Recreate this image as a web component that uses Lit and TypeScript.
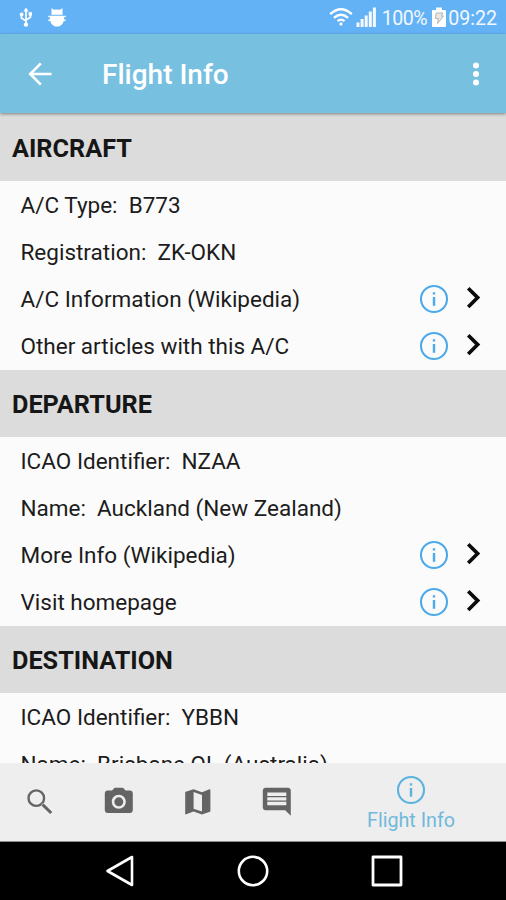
import { LitElement, html, css, svg, nothing } from "lit";
import { customElement } from "lit/decorators.js";

interface Row {
  label: string;
  value?: string;
  link?: boolean;
}
interface Section {
  title: string;
  rows: Row[];
}

const sections: Section[] = [
  {
    title: "AIRCRAFT",
    rows: [
      { label: "A/C Type:", value: "B773" },
      { label: "Registration:", value: "ZK-OKN" },
      { label: "A/C Information (Wikipedia)", link: true },
      { label: "Other articles with this A/C", link: true },
    ],
  },
  {
    title: "DEPARTURE",
    rows: [
      { label: "ICAO Identifier:", value: "NZAA" },
      { label: "Name:", value: "Auckland (New Zealand)" },
      { label: "More Info (Wikipedia)", link: true },
      { label: "Visit homepage", link: true },
    ],
  },
  {
    title: "DESTINATION",
    rows: [
      { label: "ICAO Identifier:", value: "YBBN" },
      { label: "Name:", value: "Brisbane QL (Australia)" },
    ],
  },
];

const infoIcon = html`<svg class="info" width="30" height="30" viewBox="0 0 30 30">
  <circle cx="15" cy="15" r="13" fill="none" stroke="currentColor" stroke-width="2.1" />
  <path d="M13.8 8.2h2.4v2.3h-2.4zM13.8 13.1h2.4v8.6h-2.4z" fill="currentColor" />
</svg>`;

const chevron = html`<svg class="chevron" width="16" height="24" viewBox="0 0 16 24">
  <path d="M2.2 2.2 11.7 11.6 2.2 21" fill="none" stroke="#0b0b0b" stroke-width="3.6" />
</svg>`;

const tabIcons = [
  "M9.5 3a6.400 6.400 0 1 0 0 12.800a6.400 6.400 0 1 0 0-12.800zm0 1.700a4.700 4.700 0 1 1 0 9.400a4.700 4.700 0 1 1 0-9.400zM12.900 14.400 14.400 12.900 20.900 19.300 19.400 20.800z",
  "M12 8.8a3.2 3.2 0 1 0 0 6.4a3.2 3.2 0 1 0 0-6.4zM9 2 7.17 4H4c-1.1 0-2 .9-2 2v12c0 1.1.9 2 2 2h16c1.1 0 2-.9 2-2V6c0-1.1-.9-2-2-2h-3.17L15 2H9zm3 15c-2.76 0-5-2.24-5-5s2.24-5 5-5 5 2.24 5 5-2.24 5-5 5z",
  "M20.5 3l-.16.03L15 5.1 9 3 3.36 4.9c-.21.07-.36.25-.36.48V20.5c0 .28.22.5.5.5l.16-.03L9 18.9l6 2.1 5.64-1.9c.21-.07.36-.25.36-.48V3.5c0-.28-.22-.5-.5-.5zM15 19l-6-2.11V5l6 2.11V19z",
  "M21.99 4c0-1.1-.89-2-1.99-2H4c-1.1 0-2 .9-2 2v12c0 1.1.9 2 2 2h14l4 4-.01-18zM18.800 14.500H5.200v-2.500h13.600zm0-3.400H5.200V8.800h13.600zm0-3.200H5.200V5.400h13.600z",
];

@customElement("app-root")
export class AppRoot extends LitElement {
  static styles = css`
    :host {
      display: flex;
      flex-direction: column;
      height: 900px;
      width: 506px;
      overflow: hidden;
      font-family: Roboto, "Liberation Sans", sans-serif;
      background: #fbfbfb;
      color: #1c1c1c;
    }
    svg {
      display: block;
      flex: none;
    }
    .status {
      flex: none;
      height: 34px;
      background: #64b2f6;
      color: #f2f8ff;
      display: flex;
      align-items: center;
      padding: 0 9px 0 18px;
      font-size: 19.6px;
      box-sizing: border-box;
    }
    .status span {
      line-height: 34px;
      padding-top: 3px;
    }
    .droid {
      margin-left: 13px;
    }
    .wifi {
      margin-left: auto;
    }
    .signal {
      margin: 0 5px 0 3px;
    }
    .percent {
      letter-spacing: -0.5px;
    }
    .battery {
      margin: 0 2px 0 5px;
    }
    .toolbar {
      flex: none;
      height: 79px;
      background: #78c0e0;
      color: #fff;
      display: flex;
      align-items: center;
      padding: 0 22px 0 28px;
      box-sizing: border-box;
      box-shadow: 0 1px 3px rgba(60, 50, 50, 0.55);
      z-index: 1;
    }
    .title {
      flex: 1;
      margin: 3px 0 0 50px;
      font-size: 28px;
      font-weight: 500;
      line-height: 36px;
    }
    .list {
      flex: 1;
      min-height: 0;
      overflow: hidden;
      padding-top: 1px;
      background: #dcdcdc;
    }
    .heading {
      height: 67.2px;
      line-height: 70px;
      padding-left: 12px;
      background: #dcdcdc;
      font-size: 25.25px;
      font-weight: 700;
      color: #161616;
    }
    .rows {
      background: #fbfbfb;
    }
    .row {
      height: 47.2px;
      display: flex;
      align-items: center;
      padding: 0 24.5px 0 20.5px;
      font-size: 22.5px;
    }
    .label {
      white-space: pre;
      padding-top: 0.3px;
    }
    .info {
      color: #4ca9ea;
      margin-left: auto;
    }
    .chevron {
      margin: -2px 0 0 17px;
    }
    .tabs {
      flex: none;
      height: 79px;
      box-sizing: border-box;
      background: #eeeeee;
      border-bottom: 1px solid #8e8e8e;
      display: grid;
      grid-template-columns: repeat(4, 79px) 1fr;
      align-items: center;
      justify-items: center;
      color: #646464;
    }
    .active {
      color: #70b9dc;
      font-size: 19.7px;
      line-height: 24px;
      display: flex;
      flex-direction: column;
      align-items: center;
      gap: 4px;
      padding-top: 4px;
    }
    .active .info {
      color: #5bb4dd;
      margin: 0;
    }
    .navbar {
      flex: none;
      height: 58px;
      background: #000;
      display: flex;
      align-items: center;
      justify-content: space-between;
      padding: 0 102px 0 104px;
    }
  `;

  render() {
    return html`
      <div class="status">
        <svg width="16" height="22" viewBox="0 0 16 22" fill="none" stroke="#fff" stroke-width="1.7">
          <path d="M8 4v14M3.4 9v3L8 15M12.4 8v3.2L8 14" />
          <path d="M8 1.500l2.6 4H5.400z" fill="#fff" stroke="none" />
          <circle cx="8" cy="18.600" r="2.200" fill="#fff" stroke="none" />
          <circle cx="3.600" cy="8.400" r="1.900" fill="#fff" stroke="none" />
          <path d="M10.600 6.200H14v3.400h-3.400z" fill="#fff" stroke="none" />
        </svg>
        <svg class="droid" width="20" height="22" viewBox="0 0 20 22" fill="#fff">
          <path d="M4.600 2 6.800 3.800Q10 3.200 13.200 3.800L15.400 2 15.600 8.800H4.400zM1.300 9.800H18.700V11.200H1.300zM3 9.800H17V14.500Q16 18.500 13 20Q10 21.200 7 20Q4 18.500 3 14.500zM1.300 13.600H18.700V15H1.300z" />
        </svg>
        <svg class="wifi" width="24" height="20" viewBox="0 0 24 20" fill="none" stroke="#fff" stroke-width="2.300">
          <path d="M1.200 7.200Q12-2.600 22.800 7.200M4.900 10.900Q12 4.600 19.100 10.900M8.500 14.200Q12 11.100 15.500 14.200" />
          <circle cx="12" cy="16.900" r="1.600" fill="#fff" stroke="none" />
        </svg>
        <svg class="signal" width="21" height="22" viewBox="0 0 21 22" fill="#f4faff">
          <path d="M.5 16.500h3v4.500h-3zM4.600 13h3v8h-3zM8.700 9.500h3V21h-3zM12.800 5.500h3V21h-3zM16.900 1.500h3V21h-3z" />
        </svg>
        <span class="percent">100%</span>
        <svg class="battery" width="14" height="22" viewBox="0 0 14 22">
          <path d="M4 1.500h6V4h3q1 0 1 1v15q0 1-1 1H1q-1 0-1-1V5q0-1 1-1h3z" fill="#fff" />
          <path d="M4.200 7h6.600L9.500 10h2L5.600 17.500 6.400 12.500H3.300z" fill="#e8e8e2" stroke="#b4b8b4" />
        </svg>
        <span>09:22</span>
      </div>
      <div class="toolbar">
        <svg width="24" height="24" viewBox="0 0 24 24" fill="none" stroke="#fff" stroke-width="2.600">
          <path d="M12.800 1.400 2.200 12l10.600 10.600M2.200 12H23.500" />
        </svg>
        <div class="title">Flight Info</div>
        <svg width="16" height="26" viewBox="0 0 16 26" fill="#fff">
          <circle cx="8" cy="4.500" r="3" /><circle cx="8" cy="13" r="3" /><circle cx="8" cy="21.500" r="3" />
        </svg>
      </div>
      <div class="list">
        ${sections.map(
          (s) => html`
            <div class="heading">${s.title}</div>
            <div class="rows">
              ${s.rows.map(
                (r) => html`<div class="row">
                  <span class="label">${r.value ? `${r.label}  ${r.value}` : r.label}</span>
                  ${r.link ? html`${infoIcon}${chevron}` : nothing}
                </div>`
              )}
            </div>
          `
        )}
      </div>
      <div class="tabs">
        ${tabIcons.map(
          (d) => html`<svg width="33.600" height="33.600" viewBox="0 0 24 24" fill="currentColor" fill-rule="evenodd">${svg`<path d=${d} />`}</svg>`
        )}
        <div class="active">${infoIcon}<span>Flight Info</span></div>
      </div>
      <div class="navbar">
        <svg width="32" height="34" viewBox="0 0 32 34" fill="none" stroke="#fff" stroke-width="2.600" stroke-linejoin="round">
          <path d="M3.500 17 28 3v28z" />
        </svg>
        <svg width="34" height="34" viewBox="0 0 34 34" fill="none" stroke="#fff" stroke-width="2.600">
          <circle cx="17" cy="17" r="14.200" />
        </svg>
        <svg width="34" height="34" viewBox="0 0 34 34" fill="none" stroke="#fff" stroke-width="2.800" stroke-linejoin="round">
          <path d="M3 3H31V31H3z" />
        </svg>
      </div>
    `;
  }
}
